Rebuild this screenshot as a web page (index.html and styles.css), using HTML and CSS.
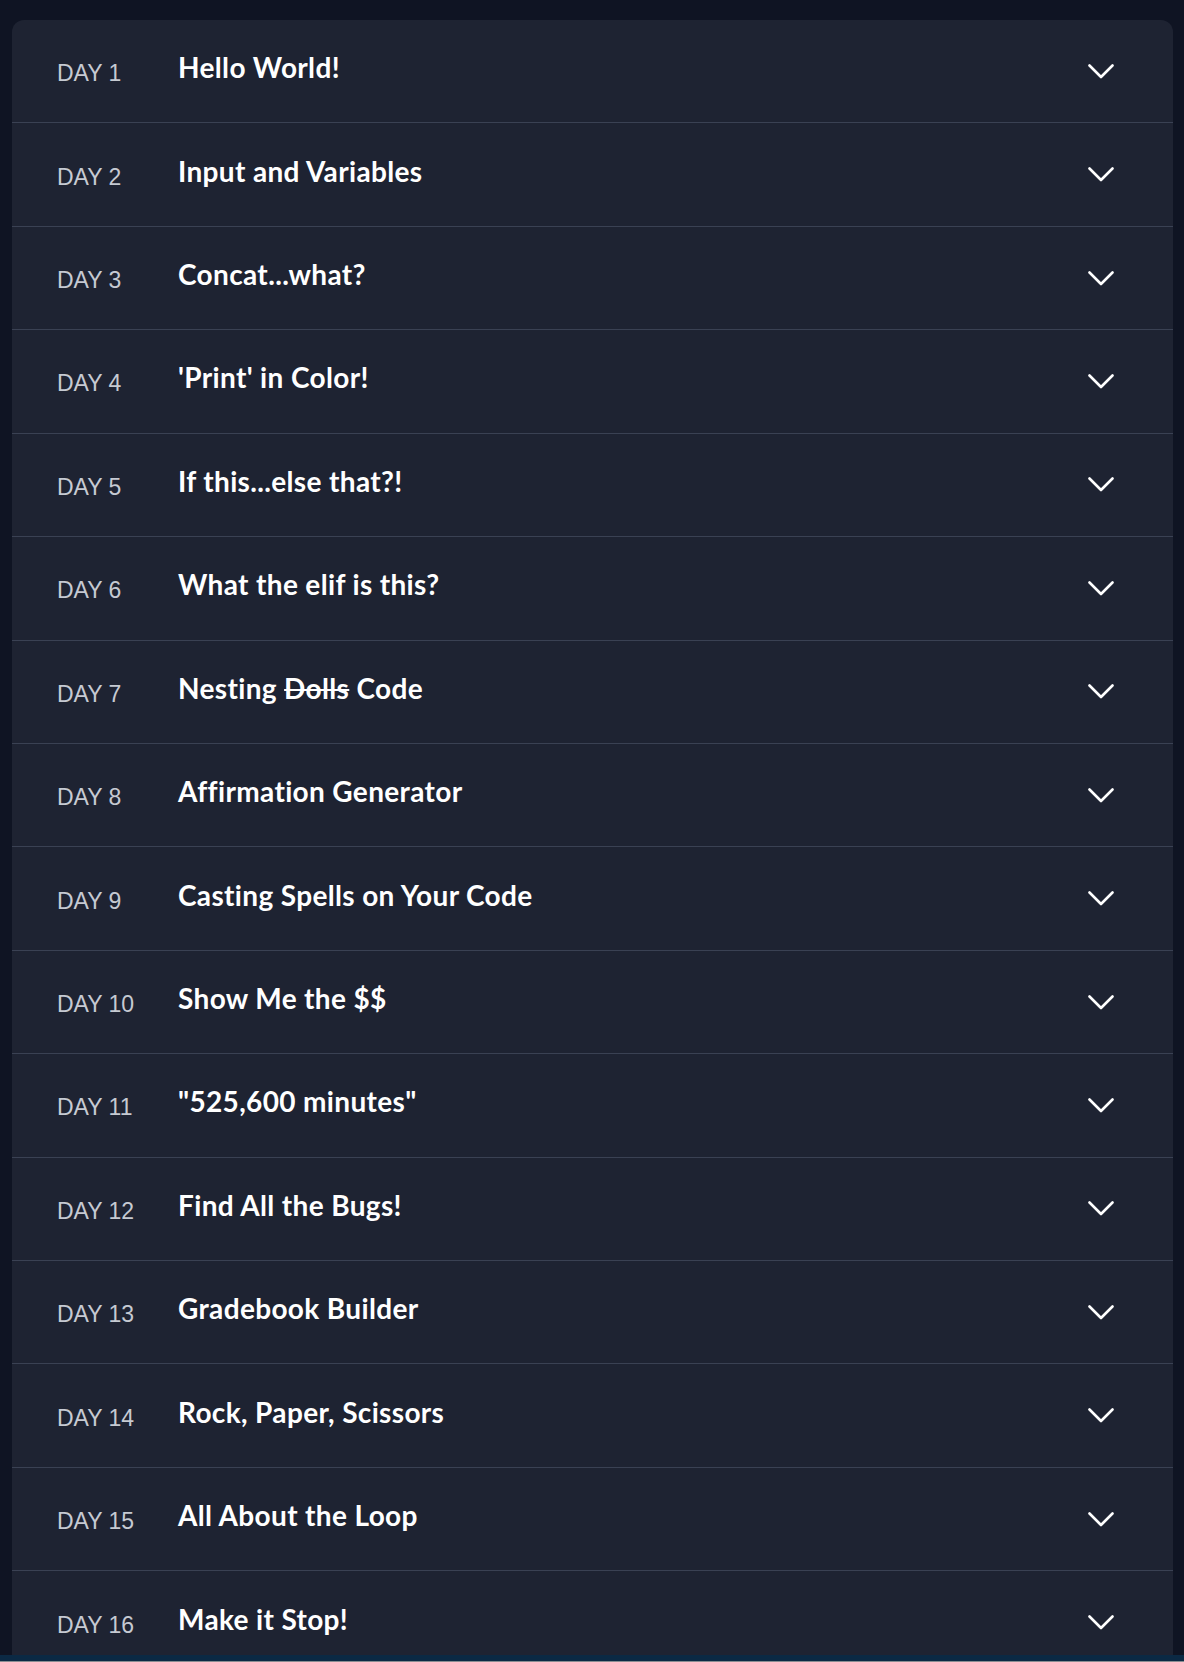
FILE: index.html
```html
<!DOCTYPE html>
<html lang="en">
<head>
<meta charset="utf-8">
<title>Days</title>
<link rel="stylesheet" href="styles.css">
</head>
<body>
<div class="card">
  <div class="row"><span class="day">DAY 1</span><span class="title">Hello World!</span><svg class="chev" viewBox="0 0 26 15"><polyline points="1.5,1.5 13,13 24.5,1.5"/></svg></div>
  <div class="row"><span class="day">DAY 2</span><span class="title">Input and Variables</span><svg class="chev" viewBox="0 0 26 15"><polyline points="1.5,1.5 13,13 24.5,1.5"/></svg></div>
  <div class="row"><span class="day">DAY 3</span><span class="title">Concat...what?</span><svg class="chev" viewBox="0 0 26 15"><polyline points="1.5,1.5 13,13 24.5,1.5"/></svg></div>
  <div class="row"><span class="day">DAY 4</span><span class="title">'Print' in Color!</span><svg class="chev" viewBox="0 0 26 15"><polyline points="1.5,1.5 13,13 24.5,1.5"/></svg></div>
  <div class="row"><span class="day">DAY 5</span><span class="title">If this...else that?!</span><svg class="chev" viewBox="0 0 26 15"><polyline points="1.5,1.5 13,13 24.5,1.5"/></svg></div>
  <div class="row"><span class="day">DAY 6</span><span class="title">What the elif is this?</span><svg class="chev" viewBox="0 0 26 15"><polyline points="1.5,1.5 13,13 24.5,1.5"/></svg></div>
  <div class="row"><span class="day">DAY 7</span><span class="title">Nesting <s>Dolls</s> Code</span><svg class="chev" viewBox="0 0 26 15"><polyline points="1.5,1.5 13,13 24.5,1.5"/></svg></div>
  <div class="row"><span class="day">DAY 8</span><span class="title">Affirmation Generator</span><svg class="chev" viewBox="0 0 26 15"><polyline points="1.5,1.5 13,13 24.5,1.5"/></svg></div>
  <div class="row"><span class="day">DAY 9</span><span class="title">Casting Spells on Your Code</span><svg class="chev" viewBox="0 0 26 15"><polyline points="1.5,1.5 13,13 24.5,1.5"/></svg></div>
  <div class="row"><span class="day">DAY 10</span><span class="title">Show Me the $$</span><svg class="chev" viewBox="0 0 26 15"><polyline points="1.5,1.5 13,13 24.5,1.5"/></svg></div>
  <div class="row"><span class="day">DAY 11</span><span class="title">"525,600 minutes"</span><svg class="chev" viewBox="0 0 26 15"><polyline points="1.5,1.5 13,13 24.5,1.5"/></svg></div>
  <div class="row"><span class="day">DAY 12</span><span class="title">Find All the Bugs!</span><svg class="chev" viewBox="0 0 26 15"><polyline points="1.5,1.5 13,13 24.5,1.5"/></svg></div>
  <div class="row"><span class="day">DAY 13</span><span class="title">Gradebook Builder</span><svg class="chev" viewBox="0 0 26 15"><polyline points="1.5,1.5 13,13 24.5,1.5"/></svg></div>
  <div class="row"><span class="day">DAY 14</span><span class="title">Rock, Paper, Scissors</span><svg class="chev" viewBox="0 0 26 15"><polyline points="1.5,1.5 13,13 24.5,1.5"/></svg></div>
  <div class="row"><span class="day">DAY 15</span><span class="title">All About the Loop</span><svg class="chev" viewBox="0 0 26 15"><polyline points="1.5,1.5 13,13 24.5,1.5"/></svg></div>
  <div class="row"><span class="day">DAY 16</span><span class="title">Make it Stop!</span><svg class="chev" viewBox="0 0 26 15"><polyline points="1.5,1.5 13,13 24.5,1.5"/></svg></div>
</div>
<div class="bottombar"></div>
</body>
</html>
```

FILE: styles.css
```css
html, body {
  margin: 0;
  padding: 0;
  background: #0f1423;
  overflow: hidden;
  height: 100%;
}
body {
  padding: 20px 11px 0 12px;
  box-sizing: border-box;
}
.card {
  background: #1e2332;
  border-radius: 12px;
}
.row {
  display: flex;
  align-items: center;
  height: 102.43px;
  padding: 0 59px 0 45px;
  border-bottom: 1px solid #3a4153;
}
.day {
  width: 122px;
  flex: none;
  font-family: "Liberation Sans", Arial, sans-serif;
  font-size: 23px;
  color: #c6cad2;
  margin-top: 5px;
}
.title {
  flex: 1;
  font-family: Lato, "Noto Sans", sans-serif;
  font-weight: 700;
  font-size: 28px;
  letter-spacing: 0.35px;
  color: #ffffff;
  margin-bottom: 8px;
  margin-left: -1px;
}
.title s {
  text-decoration-thickness: 2px;
}
.chev {
  width: 26px;
  height: 15px;
  flex: none;
  fill: none;
  stroke: #ffffff;
  stroke-width: 2.6;
  stroke-linecap: round;
  stroke-linejoin: round;
}
.bottombar {
  position: fixed;
  left: 0;
  right: 0;
  bottom: 0;
  height: 6px;
  background: #0b2944;
  border-bottom: 1px solid #8a8d92;
}
```
